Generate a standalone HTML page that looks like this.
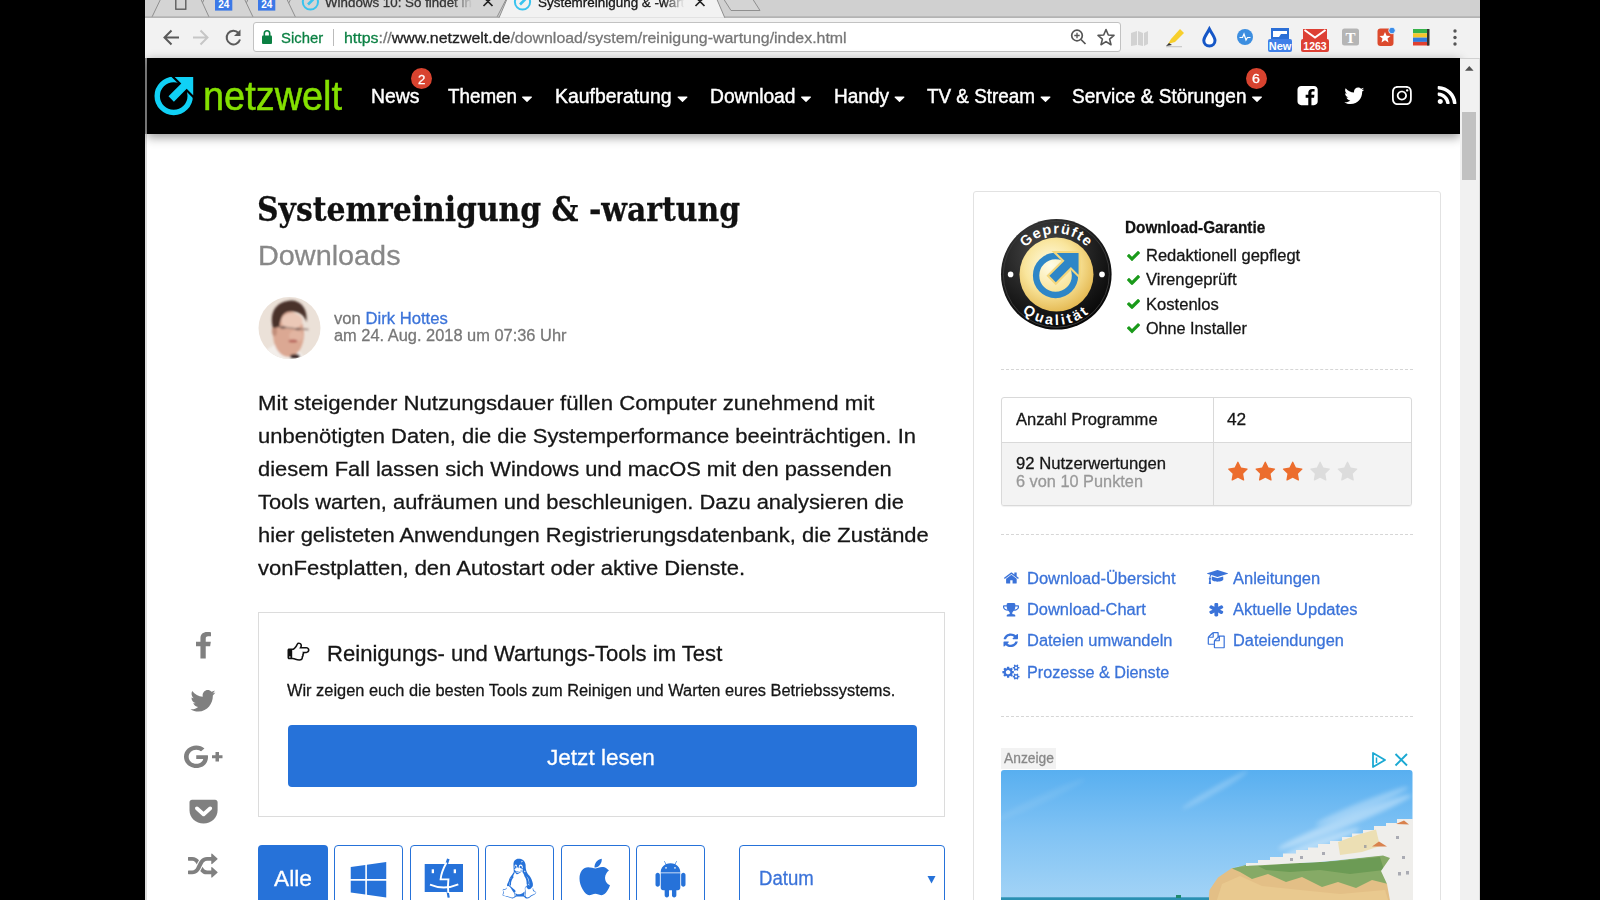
<!DOCTYPE html>
<html lang="de"><head><meta charset="utf-8"><title>Systemreinigung &amp; -wartung - Downloads - netzwelt</title>
<style>
html,body{margin:0;padding:0}
body{width:1600px;height:900px;background:#000;overflow:hidden;position:relative;font-family:"Liberation Sans",sans-serif}
.a{position:absolute;box-sizing:border-box}
.t{position:absolute;white-space:nowrap;line-height:1;margin:0;-webkit-text-stroke:.28px currentColor}
svg{position:absolute;left:0;top:0;overflow:visible}
</style></head><body>
<!-- browser window background -->
<div class="a" style="left:145px;top:0;width:1335px;height:900px;background:#fff"></div>
<div class="a" style="left:145px;top:58px;width:2px;height:76px;background:#8e8e8e"></div><div class="a" style="left:145px;top:134px;width:2px;height:766px;background:#dedede"></div>
<!-- tab strip -->
<div class="a" style="left:145px;top:0;width:1335px;height:17px;background:#d0d0d0"></div>
<!-- toolbar -->
<div class="a" style="left:145px;top:17px;width:1335px;height:41px;background:#f2f2f2"></div>
<div class="a" style="left:253px;top:22px;width:868px;height:30px;background:#fff;border:1px solid #c2c2c2;border-radius:3px"></div>
<div class="a" style="left:333px;top:29px;width:1px;height:17px;background:#bbb"></div>
<!-- page nav -->
<div class="a" style="left:147px;top:58px;width:1313px;height:76.3px;background:#000;box-shadow:0 3px 10px rgba(0,0,0,.42)"></div>
<!-- scrollbar -->
<div class="a" style="left:1460px;top:58px;width:20px;height:842px;background:#f1f1f1;border-right:1px solid #dcdcdc;border-top:1px solid #d0d0d0"></div>
<div class="a" style="left:1462px;top:112px;width:14px;height:68px;background:#c1c1c1"></div>
<!-- nav badges -->
<div class="a" style="left:411px;top:68px;width:21px;height:21px;border-radius:50%;background:#d8432f"></div>
<div class="a" style="left:1246px;top:68px;width:21px;height:21px;border-radius:50%;background:#d8432f"></div>
<!-- main box -->
<div class="a" style="left:258px;top:612px;width:687px;height:205px;border:1px solid #dcdcdc;background:#fff"></div>
<div class="a" style="left:288px;top:724.5px;width:628.5px;height:62.5px;border-radius:4px;background:#2672d9"></div>
<!-- filter buttons -->
<div class="a" style="left:258px;top:845px;width:69.5px;height:70px;border-radius:4px;background:#2672d9"></div>
<div class="a" style="left:334px;top:845px;width:69px;height:70px;border-radius:4px;border:1px solid #2672d9;background:#fff"></div>
<div class="a" style="left:409.5px;top:845px;width:69px;height:70px;border-radius:4px;border:1px solid #2672d9;background:#fff"></div>
<div class="a" style="left:485px;top:845px;width:69px;height:70px;border-radius:4px;border:1px solid #2672d9;background:#fff"></div>
<div class="a" style="left:560.5px;top:845px;width:69px;height:70px;border-radius:4px;border:1px solid #2672d9;background:#fff"></div>
<div class="a" style="left:636px;top:845px;width:69px;height:70px;border-radius:4px;border:1px solid #2672d9;background:#fff"></div>
<div class="a" style="left:739px;top:845px;width:206px;height:70px;border-radius:4px;border:1px solid #2672d9;background:#fff"></div>
<!-- sidebar -->
<div class="a" style="left:973px;top:191px;width:468px;height:730px;border:1px solid #e2e2e2;border-radius:3px;background:#fff"></div>
<div class="a" style="left:1001px;top:369px;width:412px;height:0;border-top:1px dashed #d6d6d6"></div>
<div class="a" style="left:1001px;top:534px;width:412px;height:0;border-top:1px dashed #d6d6d6"></div>
<div class="a" style="left:1001px;top:716px;width:412px;height:0;border-top:1px dashed #d6d6d6"></div>
<div class="a" style="left:1001px;top:397px;width:411px;height:109px;border:1px solid #d9d9d9;border-radius:3px;background:#fff;box-shadow:0 1px 1px rgba(0,0,0,.06);overflow:hidden">
  <div class="a" style="left:0;top:44px;width:411px;height:65px;background:#f3f3f3;border-top:1px solid #d9d9d9"></div>
  <div class="a" style="left:211px;top:0;width:1px;height:109px;background:#d9d9d9"></div>
</div>
<div class="a" style="left:1001px;top:748px;width:55px;height:21px;background:#f2f2f2"></div>
<svg width="1600" height="900" viewBox="0 0 1600 900"><defs>
<radialGradient id="gold" cx="0.42" cy="0.38" r="0.7"><stop offset="0" stop-color="#fffce8"/><stop offset="0.500" stop-color="#f9e59c"/><stop offset="1" stop-color="#e0b043"/></radialGradient>
<radialGradient id="blk" cx="0.4" cy="0.3" r="0.8"><stop offset="0" stop-color="#4a4a4a"/><stop offset="0.6" stop-color="#1c1c1c"/><stop offset="1" stop-color="#000"/></radialGradient>
<linearGradient id="sky" x1="0" y1="0" x2="0" y2="1"><stop offset="0" stop-color="#58aff0"/><stop offset="0.450" stop-color="#7fc2f4"/><stop offset="1" stop-color="#a6d5f6"/></linearGradient>
<clipPath id="adclip"><rect x="1001" y="770" width="411.5" height="140" rx="3"/></clipPath>
<clipPath id="avclip"><circle cx="289.5" cy="328" r="31"/></clipPath>
<filter id="bl2"><feGaussianBlur stdDeviation="2"/></filter>
<filter id="bl05"><feGaussianBlur stdDeviation="0.600"/></filter>
<filter id="bl1"><feGaussianBlur stdDeviation="1"/></filter>
<path id="arcTop" d="M1015.5,274.5 A41,41 0 0 1 1097.5,274.5"/>
<path id="arcBot" d="M1006,274.5 A50.5,50.5 0 0 0 1107,274.5"/>
</defs>
<!-- tabs -->
<g stroke="#8f8f8f" stroke-width="1" fill="#d4d4d4">
<path d="M282,17 L290.500,-0.500 L506,-0.500 L497,17"/>
<path d="M239.500,17 L248,-0.500 L287,-0.500 L295.400,17"/>
<path d="M196,17 L204,-0.500 L244.700,-0.500 L253,17"/>
<path d="M152,17 L160.400,-0.500 L201,-0.500 L209,17"/>
<path d="M724,-0.500 L753,-0.500 L760,10.500 L731,10.500 Z"/>
</g>
<rect x="145" y="16.500" width="1335" height="1.300" fill="#a3a3a3"/>
<path d="M499,17.800 L506.800,-0.500 L717,-0.500 L724.800,17.800" fill="#f2f2f2" stroke="#8f8f8f"/>

<rect x="175.800" y="-3" width="10" height="12.200" fill="none" stroke="#555" stroke-width="1.3"/>
<rect x="215" y="-4" width="17.300" height="14.600" fill="#3b78e7"/><rect x="258" y="-4" width="17.300" height="14.600" fill="#3b78e7"/>
<circle cx="310.400" cy="2" r="7.600" fill="none" stroke="#39c3ee" stroke-width="2"/>
<circle cx="522.500" cy="2" r="7.600" fill="none" stroke="#39c3ee" stroke-width="2"/>
<path d="M308,4.500 L315,-2.500 M520,4.500 L527,-2.500" stroke="#39c3ee" stroke-width="2.600"/>
<path d="M483.500,-3 L492.500,6 M492.500,-3 L483.500,6 M695.500,-3 L704.500,6 M704.500,-3 L695.500,6" stroke="#222" stroke-width="1.700" fill="none"/>
<!-- toolbar icons -->
<g fill="none" stroke="#5a5a5a" stroke-width="2">
<path d="M179,37.5 H165 M171.5,30.5 L164.5,37.5 L171.5,44.5"/>
<path d="M193,37.5 H207 M200.5,30.5 L207.5,37.5 L200.5,44.5" stroke="#c6c6c6"/>
<path d="M238.5,33 A6.8,6.8 0 1 0 240,39.5"/>
<path d="M240.5,29.5 V36 H234 Z" fill="#5a5a5a" stroke="none"/>
</g>
<rect x="262" y="35.5" width="10" height="8.5" rx="1" fill="#0b8043"/>
<path d="M264.3,36 V33.5 A2.7,2.7 0 0 1 269.7,33.5 V36" fill="none" stroke="#0b8043" stroke-width="1.6"/>
<g fill="none" stroke="#555" stroke-width="1.7">
<circle cx="1077" cy="35.5" r="5.3"/><path d="M1081,39.5 L1085.5,44"/><path d="M1074.3,35.5 H1079.7 M1077,32.8 V38.2" stroke-width="1.3"/>
<path d="M1106,29.5 L1108.3,35 L1114,35.4 L1109.6,39.1 L1111,44.7 L1106,41.6 L1101,44.7 L1102.4,39.1 L1098,35.4 L1103.7,35 Z" stroke-linejoin="round" stroke-width="1.6"/>
</g>
<!-- extension icons -->
<g>
<path d="M1131,33 L1137,31 V45 L1131,46 Z M1138,31 L1143,33 V46 L1138,45 Z M1144,33 L1148,31 V44 L1144,46Z" fill="#d2d2d2"/>
<path d="M1168,44 L1171,39 L1180,29 L1184,33 L1175,42 Z" fill="#f7cf2d"/><path d="M1166,46 L1169,43 L1172,45 Z" fill="#333"/><rect x="1166" y="46" width="16" height="1.3" fill="#ccc"/>
<path d="M1209.4,29 C1212,34 1215,37 1215,40.5 A5.6,5.6 0 0 1 1203.8,40.500 C1203.800,37 1207,34 1209.400,29 Z" fill="#fff" stroke="#1657c7" stroke-width="3"/>
<circle cx="1245" cy="37" r="8" fill="#3c8ee0"/><path d="M1239.500,37.500 H1242.500 L1244,34 L1246,40 L1247.500,37.500 H1250.500" fill="none" stroke="#fff" stroke-width="1.200"/>
<rect x="1271" y="28" width="18" height="12" fill="#2b6fd6"/><path d="M1273,31 H1287 V34 L1281,34 L1279,37 H1273Z" fill="#fff"/>
<rect x="1268" y="39" width="24" height="13" rx="2" fill="#3f7fe8"/>
<path d="M1303,29 H1327 V41 H1303 Z" fill="#dd4034"/><path d="M1304.500,30 L1315,37.500 L1325.500,30" fill="none" stroke="#fff" stroke-width="2"/>
<rect x="1301" y="39" width="28" height="13" rx="2" fill="#dd4034"/>
<rect x="1342" y="28.500" width="17" height="17" rx="2.500" fill="#b5b5b5"/>
<rect x="1377.500" y="28.500" width="16" height="17.500" rx="3" fill="#dc4a2d"/><path d="M1385,32 L1386.600,35.800 L1390.500,36 L1387.500,38.600 L1388.500,42.500 L1385,40.300 L1381.500,42.500 L1382.500,38.600 L1379.500,36 L1383.400,35.800 Z" fill="#fff"/><circle cx="1392" cy="30.500" r="3.300" fill="#3b8de8" stroke="#fff" stroke-width=".8"/>
<rect x="1413" y="29" width="16" height="4.300" fill="#37b34a"/><rect x="1413" y="33.300" width="16" height="4.300" fill="#f6c62b"/><rect x="1413" y="37.600" width="16" height="4.300" fill="#2f7de0"/><rect x="1413" y="41.900" width="16" height="3.600" fill="#e0402f"/><rect x="1427" y="29" width="2.500" height="16.500" fill="#333"/>
<circle cx="1455" cy="31" r="1.700" fill="#555"/><circle cx="1455" cy="37.500" r="1.700" fill="#555"/><circle cx="1455" cy="44" r="1.700" fill="#555"/>
</g>
<!-- scrollbar arrow -->
<path d="M1465,70.800 L1469.300,66 L1473.600,70.800 Z" fill="#505050"/>
<!-- netzwelt logo -->
<g id="nwlogo">
<circle cx="173.700" cy="96" r="16.500" fill="none" stroke="#10d1f6" stroke-width="5.400"/>
<path d="M174.700,77 L193.200,77 L193.200,95.300 L186.700,88.800 L173.900,101.800 L168.500,96.300 L181.300,83.400 Z" fill="#10d1f6" stroke="#000" stroke-width="4.400" paint-order="stroke fill" stroke-linejoin="miter"/>
</g>
<!-- avatar -->
<g clip-path="url(#avclip)">
<rect x="256" y="295" width="68" height="68" fill="#ebe1d8"/>
<g filter="url(#bl1)">
<path d="M262,364 L266,350 L276,344 L300,352 L310,364 Z" fill="#f3eeea"/>
<ellipse cx="288.500" cy="334" rx="15.500" ry="23" fill="#dba893"/>
<ellipse cx="292" cy="321" rx="10.500" ry="8" fill="#ebc8b7"/>
<ellipse cx="296" cy="336" rx="7" ry="6" fill="#e2b5a1"/><ellipse cx="283" cy="327.500" rx="3" ry="1.200" fill="#6b4f48"/><ellipse cx="298" cy="329" rx="3" ry="1.200" fill="#6b4f48"/>
<ellipse cx="274.500" cy="331" rx="2.500" ry="5" fill="#c18d79"/>
<path d="M273,328 C269,312 276,302 290,300.500 C300,300 308,308 306.500,322 C304,315 299,311.500 292,311.500 C284,311 280.500,316 279.500,327 Z" fill="#49302a"/>
<path d="M279,326.500 L294,328.500 L308.500,329.500" stroke="#8d766d" stroke-width="1.300" fill="none" opacity=".85"/>
<ellipse cx="293" cy="341" rx="4.500" ry="1.600" fill="#b7655c"/>
<ellipse cx="295" cy="356.500" rx="5" ry="2.500" fill="#3f2c2c"/>
</g>
</g>
<!-- seal -->
<circle cx="1056.300" cy="274.300" r="55.300" fill="url(#blk)"/>
<circle cx="1056.300" cy="274.300" r="53" fill="none" stroke="#3a3a3a" stroke-width="1"/>
<circle cx="1056.500" cy="274.500" r="37" fill="url(#gold)"/>
<circle cx="1010.600" cy="274.400" r="2.800" fill="#fff"/><circle cx="1102" cy="274.400" r="2.800" fill="#fff"/>
<g transform="translate(1056.500,275.500) scale(1.180) translate(-174.500,-96)">
<circle cx="173.700" cy="96" r="16.500" fill="none" stroke="#2e86c7" stroke-width="5.400"/>
<path d="M174.700,77 L193.200,77 L193.200,95.300 L186.700,88.800 L173.900,101.800 L168.500,96.300 L181.300,83.400 Z" fill="#2e86c7" stroke="#f4d77d" stroke-width="3.600" paint-order="stroke fill"/>
</g>
<text font-family="'Liberation Sans',sans-serif" font-weight="700" font-size="14.500" fill="#fff" letter-spacing="1.300"><textPath href="#arcTop" startOffset="50%" text-anchor="middle">Geprüfte</textPath></text>
<text font-family="'Liberation Sans',sans-serif" font-weight="700" font-size="14.500" fill="#fff" letter-spacing="2.600"><textPath href="#arcBot" startOffset="50%" text-anchor="middle">Qualität</textPath></text>
<!-- ext labels text -->
<text x="1280" y="49.500" text-anchor="middle" font-family="'Liberation Sans',sans-serif" font-weight="700" font-size="11" fill="#fff">New</text>
<text x="1315" y="49.500" text-anchor="middle" font-family="'Liberation Sans',sans-serif" font-weight="700" font-size="10.500" fill="#fff">1263</text>
<text x="1350.500" y="42.500" text-anchor="middle" font-family="'Liberation Serif',serif" font-weight="700" font-size="15" fill="#fff">T</text>
<text x="223.700" y="8" text-anchor="middle" font-family="'Liberation Sans',sans-serif" font-weight="700" font-size="10" fill="#fff">24</text>
<text x="266.700" y="8" text-anchor="middle" font-family="'Liberation Sans',sans-serif" font-weight="700" font-size="10" fill="#fff">24</text>
<!-- finder icon -->
<rect x="424.700" y="864" width="38.300" height="28" fill="#2672d9"/>
<path d="M446,866 L448.300,858.800" stroke="#2672d9" stroke-width="2.600" fill="none"/>
<path d="M447.300,890 L448.700,897.600" stroke="#2672d9" stroke-width="2.200" fill="none"/>
<path d="M446.500,862.500 C443.500,868 441,874 440.600,879.400 H448.400 C447.800,884 447.800,888 448.300,893" stroke="#fff" stroke-width="1.900" fill="none"/>
<rect x="431.700" y="869.300" width="2.300" height="3.900" fill="#fff"/><rect x="453.700" y="869.300" width="2.300" height="3.900" fill="#fff"/>
<path d="M430,884.600 Q444,890.500 458.300,884.300" stroke="#fff" stroke-width="1.800" fill="none"/>
<!-- select arrow -->
<path d="M927.500,876 H935.500 L931.500,883.500 Z" fill="#2672d9"/>
<!-- ad choice icons -->
<path d="M1373,753 L1385,760 L1373,767 Z" fill="none" stroke="#1ba9d3" stroke-width="1.800" stroke-linejoin="round"/><path d="M1376.500,757.500 V763" stroke="#1ba9d3" stroke-width="1.500"/>
<path d="M1395.500,754 L1407,765.500 M1407,754 L1395.500,765.500" stroke="#1ba9d3" stroke-width="1.900"/>
<!-- ad image -->
<g clip-path="url(#adclip)">
<rect x="1001" y="770" width="412" height="135" fill="url(#sky)"/>
<g filter="url(#bl2)" fill="#fff">
<ellipse cx="1345" cy="822" rx="72" ry="5" transform="rotate(-22 1345 822)" opacity=".38"/>
<ellipse cx="1362" cy="806" rx="50" ry="4" transform="rotate(-22 1362 806)" opacity=".3"/>
<ellipse cx="1322" cy="842" rx="40" ry="4" transform="rotate(-20 1322 842)" opacity=".4"/>
<ellipse cx="1215" cy="790" rx="38" ry="3" transform="rotate(-30 1215 790)" opacity=".22"/>
<ellipse cx="1040" cy="800" rx="50" ry="4" transform="rotate(-25 1040 800)" opacity=".08"/>
</g>
<g filter="url(#bl05)">
<path d="M1208,906 L1209.500,890 L1218,877.500 L1232,868 L1300,866 L1392,858 L1396,906 Z" fill="#e3bf86"/>
<path d="M1215,906 L1222,884 L1240,876 L1262,886 L1300,890 L1340,894 L1385,890 L1390,906 Z" fill="#e9c98f"/>
<path d="M1232,868.500 L1246,865 L1266,863.500 L1320,862.500 L1383,855 L1392,853 L1394,868 L1388,884 L1372,880 L1356,888 L1338,882 L1322,887 L1302,877 L1286,882 L1268,874 L1252,879 L1240,872 Z" fill="#86aa66"/>
<path d="M1258,866 L1300,863 L1340,861 L1380,857 L1384,870 L1350,874 L1320,870 L1290,872 L1266,870 Z" fill="#6c9b54"/>
<path d="M1233,866.500 L1246,866 V863 H1258 V860 H1270 V857 H1283 V853.500 H1296 V850 H1308 V847.500 H1318 V844 H1330 V841 H1342 V837 H1352 V833.500 H1363 V830 H1374 V826 H1386 V823 H1397 V819 H1413 L1413,906 L1391,906 L1387,884 L1381,871 L1390,858 L1383,855.500 L1340,860 L1320,862 L1290,863.500 L1265,865 Z" fill="#efeeeb"/>
<path d="M1338,842 L1357,835 L1376,829.500 L1380,846 L1362,852 L1340,855 Z" fill="#ecdfb4"/>
<path d="M1372,846.500 L1379,841.500 L1387,846.500 Z M1396,824 L1404,820.500 L1409,824.500Z" fill="#d9824e"/>
<path d="M1290,858 h3 v3 h-3z M1300,856 h3 v3 h-3z M1322,852 h3 v3 h-3z M1364,845 h2.500 v3 h-2.500z M1396,836 h3 v3 h-3z M1402,856 h3 v3 h-3z M1398,872 h3 v3.500 h-3z M1406,871 h3 v3.500 h-3z" fill="#8d8f9b" opacity=".7"/>
</g>
<rect x="1001" y="897.300" width="208" height="8" fill="#2a90b2"/>
<rect x="1176" y="895" width="5" height="3" fill="#1f8a6e"/>
</g>
<path transform="translate(1297.50,103.60) scale(0.01315,-0.01250)" fill="#fff" d="M1248 1408H288C129 1408 0 1279 0 1120V160C0 1 129 -128 288 -128H820V467H620V699H820V870C820 1068 942 1176 1119 1176C1203 1176 1276 1170 1297 1167V960L1175 959C1078 959 1060 914 1060 847V699H1289L1259 467H1060V-128H1248C1407 -128 1536 1 1536 160V1120C1536 1279 1407 1408 1248 1408Z"/>
<path transform="translate(1343.74,104.00) scale(0.01263,-0.01289)" fill="#fff" d="M1620 1128C1562 1103 1499 1085 1434 1078C1501 1118 1552 1181 1576 1256C1514 1219 1444 1192 1371 1178C1312 1241 1228 1280 1135 1280C956 1280 812 1135 812 957C812 932 815 907 820 883C552 897 313 1025 154 1221C126 1173 110 1118 110 1058C110 946 167 847 254 789C201 791 151 806 108 830C108 829 108 827 108 826C108 669 219 539 367 509C340 502 311 498 282 498C261 498 241 500 221 503C262 375 381 282 523 279C412 192 273 141 122 141C95 141 70 142 44 145C187 53 357 0 540 0C1134 0 1459 492 1459 919C1459 933 1459 947 1458 961C1521 1007 1576 1064 1620 1128Z"/>
<path transform="translate(1392.00,103.42) scale(0.01289,-0.01237)" fill="#fff" d="M1024 640C1024 499 909 384 768 384C627 384 512 499 512 640C512 781 627 896 768 896C909 896 1024 781 1024 640ZM1162 640C1162 858 986 1034 768 1034C550 1034 374 858 374 640C374 422 550 246 768 246C986 246 1162 422 1162 640ZM1270 1050C1270 1101 1229 1142 1178 1142C1127 1142 1086 1101 1086 1050C1086 999 1127 958 1178 958C1229 958 1270 999 1270 1050ZM768 1270C880 1270 1120 1279 1221 1239C1256 1225 1282 1208 1309 1181C1336 1154 1353 1128 1367 1093C1407 992 1398 752 1398 640C1398 528 1407 288 1367 187C1353 152 1336 126 1309 99C1282 72 1256 55 1221 41C1120 1 880 10 768 10C656 10 416 1 315 41C280 55 254 72 227 99C200 126 183 152 169 187C129 288 138 528 138 640C138 752 129 992 169 1093C183 1128 200 1154 227 1181C254 1208 280 1225 315 1239C416 1279 656 1270 768 1270ZM1536 640C1536 746 1537 851 1531 957C1525 1080 1497 1189 1407 1279C1317 1369 1208 1397 1085 1403C979 1409 874 1408 768 1408C662 1408 557 1409 451 1403C328 1397 219 1369 129 1279C39 1189 11 1080 5 957C-1 851 0 746 0 640C0 534 -1 429 5 323C11 200 39 91 129 1C219 -89 328 -117 451 -123C557 -129 662 -128 768 -128C874 -128 979 -129 1085 -123C1208 -117 1317 -89 1407 1C1497 91 1525 200 1531 323C1537 429 1536 534 1536 640Z"/>
<path transform="translate(1437.70,104.00) scale(0.01335,-0.01278)" fill="#fff" d="M384 192C384 298 298 384 192 384C86 384 0 298 0 192C0 86 86 0 192 0C298 0 384 86 384 192ZM896 69C879 282 786 483 634 634C483 786 282 879 69 896C67 896 66 896 64 896C48 896 32 890 21 879C7 867 0 850 0 832V697C0 664 25 637 58 634C363 605 605 363 634 58C637 25 664 0 697 0H832C850 0 867 7 879 21C891 34 897 51 896 69ZM1408 67C1390 417 1243 746 994 994C746 1243 417 1390 67 1408C66 1408 65 1408 64 1408C48 1408 32 1402 20 1390C7 1378 0 1362 0 1344V1201C0 1168 26 1140 60 1138C641 1104 1104 641 1137 60C1139 26 1167 0 1201 0H1344C1362 0 1378 7 1390 20C1403 33 1409 50 1408 67Z"/>
<path transform="translate(194.35,656.37) scale(0.01736,-0.01587)" fill="#808080" d="M959 1524C932 1528 839 1536 731 1536C505 1536 350 1398 350 1145V927H95V631H350V-128H656V631H910L949 927H656V1116C656 1201 679 1260 802 1260H959Z"/>
<path transform="translate(189.80,711.60) scale(0.01580,-0.01688)" fill="#808080" d="M1620 1128C1562 1103 1499 1085 1434 1078C1501 1118 1552 1181 1576 1256C1514 1219 1444 1192 1371 1178C1312 1241 1228 1280 1135 1280C956 1280 812 1135 812 957C812 932 815 907 820 883C552 897 313 1025 154 1221C126 1173 110 1118 110 1058C110 946 167 847 254 789C201 791 151 806 108 830C108 829 108 827 108 826C108 669 219 539 367 509C340 502 311 498 282 498C261 498 241 500 221 503C262 375 381 282 523 279C412 192 273 141 122 141C95 141 70 142 44 145C187 53 357 0 540 0C1134 0 1459 492 1459 919C1459 933 1459 947 1458 961C1521 1007 1576 1064 1620 1128Z"/>
<path transform="translate(184.00,766.57) scale(0.01671,-0.01535)" fill="#808080" d="M1437 623C1437 671 1432 708 1425 745H733V493H1149C1132 386 1023 177 733 177C483 177 279 384 279 640C279 896 483 1103 733 1103C876 1103 971 1042 1025 990L1224 1181C1096 1301 931 1373 733 1373C328 1373 0 1045 0 640C0 235 328 -93 733 -93C1156 -93 1437 204 1437 623ZM2304 745H2095V954H1885V745H1676V535H1885V326H2095V535H2304Z"/>
<path transform="translate(189.50,821.52) scale(0.01634,-0.01549)" fill="#808080" d="M1565 1408H156C71 1408 0 1337 0 1252V733C0 254 383 -128 861 -128C1337 -128 1720 254 1720 733V1252C1720 1338 1652 1408 1565 1408ZM861 344C831 344 801 356 780 377L375 765C352 787 339 818 339 850C339 915 392 968 457 968C487 968 516 956 538 935L861 625L1184 935C1206 956 1235 968 1266 968C1331 968 1384 915 1384 850C1384 818 1370 787 1347 765L943 377C921 356 891 344 861 344Z"/>
<path transform="translate(188.00,876.25) scale(0.01652,-0.01513)" fill="#808080" d="M666 1055C565 1197 434 1280 256 1280H32C14 1280 0 1266 0 1248V1056C0 1038 14 1024 32 1024H256C407 1024 471 903 529 782C569 876 610 969 666 1055ZM1792 256C1792 264 1789 273 1783 279L1464 598C1457 604 1449 608 1440 608C1422 608 1408 594 1408 576V384H1152C1001 384 937 505 879 626C839 532 798 439 743 353C928 93 1111 128 1408 128V-64C1408 -81 1423 -96 1440 -96C1448 -96 1457 -93 1463 -87L1783 233C1789 239 1792 248 1792 256ZM1792 1152C1792 1160 1789 1169 1783 1175L1464 1494C1457 1500 1449 1504 1440 1504C1422 1504 1408 1490 1408 1472V1280H1152C827 1280 697 1012 586 754C562 697 537 639 508 583C452 475 389 384 256 384H32C14 384 0 370 0 352V160C0 142 14 128 32 128H256C581 128 711 396 822 654C846 711 871 769 900 825C956 933 1019 1024 1152 1024H1408V832C1408 814 1423 800 1440 800C1448 800 1457 803 1463 809L1783 1129C1789 1135 1792 1144 1792 1152Z"/>
<path transform="translate(287.50,659.23) scale(0.01228,-0.01188)" fill="#111" d="M256 192C256 157 227 128 192 128C157 128 128 157 128 192C128 227 157 256 192 256C227 256 256 227 256 192ZM1664 768C1664 699 1605 640 1536 640H1205C1226 616 1240 569 1240 537C1240 490 1221 450 1187 418C1199 397 1205 373 1205 349C1205 303 1182 246 1140 223C1143 205 1145 186 1145 167C1145 47 1068 0 956 0C762 0 591 128 416 128H384V768H416C522 768 593 858 657 931C698 977 736 1023 769 1076C782 1097 794 1119 806 1141C817 1164 868 1280 896 1280C981 1280 1056 1248 1056 1152C1056 1024 960 959 960 896H1536C1603 896 1664 836 1664 768ZM1792 769C1792 907 1674 1024 1536 1024H1162C1177 1065 1184 1108 1184 1152C1184 1321 1055 1408 896 1408C762 1408 719 1237 661 1144C631 1097 597 1056 561 1015C532 982 464 896 416 896H128C57 896 0 839 0 768V128C0 57 57 0 128 0H416C479 0 578 -37 639 -59C743 -97 849 -128 961 -128C1146 -128 1275 -17 1273 172C1312 222 1333 286 1333 350C1333 364 1332 379 1330 393C1351 430 1364 470 1367 512H1536C1676 512 1792 629 1792 769Z"/>
<path transform="translate(350.75,892.04) scale(0.02133,-0.02133)" fill="#2672d9" d="M682 530H0V-27L682 -121ZM682 1273 0 1179V614H682ZM1664 530H757V-131L1664 -256ZM1664 1408 757 1283V614H1664Z"/>
<path transform="translate(502.36,892.82) scale(0.02216,-0.02218)" fill="#2672d9" d="M663 1125C631 1127 629 1104 639 1105C650 1105 643 1123 663 1125ZM750 1111C760 1115 750 1135 721 1122C739 1127 740 1108 750 1111ZM399 684C407 681 402 672 397 655C391 641 377 629 372 630C358 632 376 642 383 655C392 669 390 687 399 684ZM1254 325C1213 358 1090 364 1087 284C1065 284 1049 282 1036 266C986 207 1032 89 1027 25C1023 -31 1007 -86 999 -142C969 -141 972 -120 981 -89C990 -62 1003 -29 1004 3C1005 33 1002 51 994 55C987 60 976 51 960 25C926 -30 852 -54 783 -62C715 -71 651 -64 617 -26C606 -13 586 -30 584 -33C581 -38 595 -47 606 -67C622 -95 637 -139 599 -159C600 -58 568 -52 535 10C599 17 608 85 577 114C553 139 415 241 380 281C363 299 340 308 331 329C309 377 294 446 321 495C326 504 330 500 326 482C304 377 372 291 387 335C398 365 388 419 394 463C404 539 473 686 504 694C457 782 559 850 558 927C557 977 602 866 647 842C697 816 752 892 830 930C852 941 880 953 878 963C869 1008 776 907 692 904C654 903 640 912 625 926C581 969 630 933 696 945C725 950 735 955 766 968C798 980 833 999 868 1009C893 1015 891 1034 881 1039C876 1042 868 1042 861 1031C846 1005 775 990 753 983C724 974 693 966 651 968C587 970 602 1000 556 1026C543 1033 547 1053 564 1071C574 1080 599 1086 612 1107C614 1110 630 1127 643 1136C647 1139 647 1217 608 1218C574 1219 564 1193 565 1167C567 1141 581 1119 590 1119C608 1120 591 1100 581 1097C566 1092 546 1155 549 1185C551 1217 567 1273 607 1272C643 1271 669 1226 668 1148C668 1135 726 1154 746 1133C760 1119 698 1271 836 1282C872 1275 907 1263 921 1179C916 1171 930 1113 908 1106C881 1097 864 1107 880 1133C890 1159 880 1225 825 1221C769 1218 777 1119 792 1117C807 1115 845 1088 872 1083C959 1066 895 1016 906 955C919 887 964 905 1005 723C1013 712 1047 702 1080 562C1109 437 1068 345 1138 353C1154 354 1178 359 1188 395C1214 487 1174 598 1134 673C1111 717 1089 746 1077 756C1123 729 1182 642 1196 578C1214 493 1226 457 1199 367C1215 360 1254 343 1254 325ZM626 1152C626 1149 624 1149 623 1149C614 1149 613 1157 615 1169C617 1178 612 1184 608 1184C602 1182 600 1200 612 1197C618 1195 630 1177 626 1152ZM1045 955C1048 941 1039 925 1027 927C1007 931 960 979 981 1002C988 1009 992 989 1011 977C1027 967 1041 974 1045 955ZM867 1168C867 1165 857 1161 857 1163C855 1178 847 1192 839 1194C833 1196 829 1202 842 1203C847 1204 868 1192 867 1168ZM921 1401C916 1390 893 1393 888 1391C869 1384 863 1366 854 1373C844 1381 859 1390 863 1401C866 1411 856 1432 876 1434C884 1434 892 1427 900 1419C909 1412 922 1406 921 1401ZM1486 60C1458 78 1390 97 1384 227C1358 204 1361 83 1433 59C1513 32 1563 -13 1414 -64C1316 -98 1299 -108 1221 -173C1142 -239 1024 -213 1045 -75C1056 -2 1062 57 1044 120C1035 150 1031 190 1037 217C1048 271 1077 287 1106 236C1124 203 1130 165 1194 162C1294 158 1314 259 1346 264C1367 267 1389 328 1373 426C1355 531 1293 696 1214 780C1148 850 1107 911 1081 998C1059 1072 1047 1143 1051 1212C1057 1300 1008 1423 930 1481C881 1517 804 1537 735 1536C696 1536 659 1530 631 1515C515 1452 499 1362 501 1259C503 1163 506 1053 517 949C504 901 436 810 393 754C335 697 306 586 268 489C248 438 215 414 212 348C211 329 212 281 229 295C297 347 382 215 511 13C535 -26 622 -189 470 -210C419 -217 337 -181 258 -161C187 -144 114 -133 74 -122C49 -115 39 -106 37 -96C31 -69 67 -31 68 1C70 33 57 50 46 76C35 102 32 122 41 133C47 142 61 145 84 143C113 140 148 146 167 158C198 177 213 216 199 264C199 217 183 200 145 178C109 158 54 175 28 152C-2 126 39 57 36 6C33 -32 -7 -76 11 -115C29 -154 114 -159 202 -177C328 -203 401 -249 459 -251C544 -254 557 -169 689 -166C728 -165 766 -163 804 -162C847 -162 890 -162 934 -163C1022 -166 992 -212 1049 -241C1098 -266 1185 -256 1206 -236C1234 -209 1310 -145 1367 -116C1440 -79 1609 -16 1486 60Z"/>
<path transform="translate(579.50,892.40) scale(0.02190,-0.02191)" fill="#2672d9" d="M1393 321C1334 339 1281 381 1235 447C1189 513 1166 588 1166 670C1166 746 1188 815 1231 877C1255 912 1293 951 1345 995C1311 1037 1276 1071 1241 1095C1179 1138 1108 1160 1028 1160C979 1160 921 1148 855 1126C789 1103 741 1092 712 1092C689 1092 643 1102 574 1122C504 1142 446 1152 397 1152C282 1152 188 1104 113 1008C38 911 0 787 0 634C0 470 50 303 147 131C246 -41 345 -128 448 -128C481 -128 525 -117 580 -94C634 -72 682 -61 722 -61C763 -61 814 -71 873 -93C933 -114 979 -125 1013 -125C1098 -125 1184 -60 1270 71C1328 158 1368 242 1393 321ZM1017 1494C1017 1501 1016 1507 1016 1514C1015 1520 1013 1527 1011 1536C895 1509 811 1460 761 1388C711 1316 685 1230 683 1131C730 1135 764 1141 787 1148C823 1160 859 1184 895 1220C937 1262 968 1308 988 1358C1007 1407 1017 1453 1017 1494Z"/>
<path transform="translate(655.50,891.88) scale(0.02131,-0.02194)" fill="#2672d9" d="M493 1053C472 1053 455 1071 455 1092C455 1113 472 1131 493 1131C515 1131 532 1113 532 1092C532 1071 515 1053 493 1053ZM915 1053C893 1053 876 1071 876 1092C876 1113 893 1131 915 1131C936 1131 953 1113 953 1092C953 1071 936 1053 915 1053ZM103 869C46 869 0 823 0 767V337C0 280 46 234 103 234C160 234 205 280 205 337V767C205 823 159 869 103 869ZM1163 850H245V184C245 123 294 74 355 74H429L430 -153C430 -210 476 -256 532 -256C589 -256 635 -210 635 -153V74H773V-153C773 -210 819 -256 876 -256C933 -256 979 -210 979 -153V74H1054C1114 74 1163 123 1163 184ZM931 1255 1002 1386C1006 1393 1004 1402 997 1406C990 1409 981 1407 977 1400L905 1268C844 1295 776 1310 704 1310C632 1310 564 1295 503 1268L431 1400C427 1407 418 1409 411 1406C404 1402 402 1393 406 1386L477 1255C336 1183 241 1045 241 886H1166C1166 1045 1071 1183 931 1255ZM1408 767C1408 824 1362 869 1305 869C1249 869 1203 824 1203 767V337C1203 280 1249 234 1305 234C1362 234 1408 280 1408 337Z"/>
<path transform="translate(1003.76,583.50) scale(0.00918,-0.00865)" fill="#3b73d9" d="M1408 544C1408 546 1408 548 1407 550L832 1024L257 550C257 548 256 546 256 544V64C256 29 285 0 320 0H704V384H960V0H1344C1379 0 1408 29 1408 64ZM1631 613C1642 626 1640 647 1627 658L1408 840V1248C1408 1266 1394 1280 1376 1280H1184C1166 1280 1152 1266 1152 1248V1053L908 1257C866 1292 798 1292 756 1257L37 658C24 647 22 626 33 613L95 539C100 533 108 529 116 528C125 527 133 530 140 535L832 1112L1524 535C1530 530 1537 528 1545 528C1546 528 1547 528 1548 528C1556 529 1564 533 1569 539L1631 613Z"/>
<path transform="translate(1003.00,615.38) scale(0.00962,-0.00879)" fill="#3b73d9" d="M458 653C261 694 128 830 128 928V1024H384C384 867 416 745 458 653ZM1536 928C1536 830 1403 694 1206 653C1248 745 1280 867 1280 1024H1536V928ZM1664 1056C1664 1109 1621 1152 1568 1152H1280V1248C1280 1336 1208 1408 1120 1408H544C456 1408 384 1336 384 1248V1152H96C43 1152 0 1109 0 1056V928C0 738 230 528 542 513C582 462 619 432 637 418C690 370 704 320 704 256C704 192 672 128 576 128C480 128 384 64 384 -32V-96C384 -114 398 -128 416 -128H1248C1266 -128 1280 -114 1280 -96V-32C1280 64 1184 128 1088 128C992 128 960 192 960 256C960 320 974 370 1027 418C1045 432 1082 462 1122 513C1434 528 1664 738 1664 928Z"/>
<path transform="translate(1003.50,645.88) scale(0.00944,-0.00879)" fill="#3b73d9" d="M1511 480C1511 497 1497 512 1479 512H1287C1272 512 1262 503 1257 489C1240 449 1228 411 1204 372C1111 220 946 128 768 128C639 128 514 178 420 266L557 403C569 415 576 431 576 448C576 483 547 512 512 512H64C29 512 0 483 0 448V0C0 -35 29 -64 64 -64C81 -64 97 -57 109 -45L238 84C380 -51 569 -128 764 -128C1133 -128 1425 119 1510 473C1511 475 1511 478 1511 480ZM1536 1280C1536 1315 1507 1344 1472 1344C1455 1344 1439 1337 1427 1325L1297 1196C1155 1330 964 1408 768 1408C399 1408 104 1162 18 807C18 805 18 802 18 800C18 783 32 768 50 768H249C264 768 274 777 279 791C296 831 308 869 332 908C425 1060 590 1152 768 1152C897 1152 1022 1103 1117 1015L979 877C967 865 960 849 960 832C960 797 989 768 1024 768H1472C1507 768 1536 797 1536 832Z"/>
<path transform="translate(1002.40,677.63) scale(0.00891,-0.00857)" fill="#3b73d9" d="M896 640C896 499 781 384 640 384C499 384 384 499 384 640C384 781 499 896 640 896C781 896 896 781 896 640ZM1664 128C1664 58 1607 0 1536 0C1466 0 1408 57 1408 128C1408 198 1466 256 1536 256C1606 256 1664 198 1664 128ZM1664 1152C1664 1082 1607 1024 1536 1024C1466 1024 1408 1081 1408 1152C1408 1222 1466 1280 1536 1280C1606 1280 1664 1222 1664 1152ZM1280 731C1280 745 1270 758 1256 761L1104 784C1095 812 1083 839 1070 866C1098 905 1128 941 1157 980C1161 986 1164 992 1164 999C1164 1027 1046 1135 1020 1159C1014 1164 1007 1167 999 1167C992 1167 985 1165 979 1160L861 1071C837 1083 812 1094 786 1102L763 1255C761 1269 747 1280 733 1280H547C533 1280 521 1270 517 1256C504 1207 499 1152 494 1102C467 1093 442 1083 417 1070L302 1160C296 1164 289 1167 281 1167C252 1167 140 1046 120 1019C115 1013 113 1006 113 999C113 992 116 985 120 979C152 941 182 904 210 864C197 839 186 814 178 788L23 764C10 762 0 747 0 734V549C0 535 10 522 24 520L176 496C185 468 197 441 211 414C182 375 152 338 123 300C119 294 116 288 116 281C116 252 234 145 260 121C266 116 273 113 281 113C288 113 296 115 301 120L419 209C443 197 468 186 494 178L517 25C519 11 533 0 547 0H733C747 0 759 10 763 24C776 73 781 128 786 179C813 187 838 197 863 210L978 120C984 116 991 113 999 113C1028 113 1140 235 1160 262C1165 267 1167 274 1167 281C1167 289 1164 295 1160 301C1128 339 1098 376 1070 416C1083 441 1094 466 1102 492L1257 516C1270 518 1280 533 1280 546ZM1920 198C1920 213 1791 227 1771 229C1763 247 1753 265 1741 281C1750 301 1792 401 1792 419C1792 421 1791 424 1788 426C1776 433 1669 496 1664 496L1658 494C1624 460 1594 421 1566 382C1556 383 1546 384 1536 384C1526 384 1516 383 1506 382C1496 397 1421 496 1408 496C1403 496 1296 432 1284 426C1281 424 1280 421 1280 419C1280 402 1322 301 1331 281C1319 265 1309 247 1301 229C1281 227 1152 213 1152 198V58C1152 43 1281 29 1301 27C1309 8 1319 -9 1331 -25C1322 -45 1280 -146 1280 -163C1280 -165 1281 -168 1284 -170C1296 -177 1403 -241 1408 -241C1421 -241 1496 -141 1506 -126C1516 -127 1526 -128 1536 -128C1546 -128 1556 -127 1566 -126C1576 -141 1651 -241 1664 -241C1669 -241 1776 -177 1788 -170C1791 -168 1792 -166 1792 -163C1792 -145 1750 -45 1741 -25C1753 -9 1763 8 1771 27C1791 29 1920 43 1920 58ZM1920 1222C1920 1237 1791 1251 1771 1253C1763 1271 1753 1289 1741 1305C1750 1325 1792 1425 1792 1443C1792 1445 1791 1448 1788 1450C1776 1457 1669 1520 1664 1520L1658 1518C1624 1484 1594 1445 1566 1406C1556 1407 1546 1408 1536 1408C1526 1408 1516 1407 1506 1406C1496 1421 1421 1520 1408 1520C1403 1520 1296 1456 1284 1450C1281 1448 1280 1445 1280 1443C1280 1426 1322 1325 1331 1305C1319 1289 1309 1271 1301 1253C1281 1251 1152 1237 1152 1222V1082C1152 1067 1281 1053 1301 1051C1309 1032 1319 1015 1331 999C1322 979 1280 878 1280 861C1280 859 1281 856 1284 854C1296 847 1403 783 1408 783C1421 783 1496 883 1506 898C1516 897 1526 896 1536 896C1546 896 1556 897 1566 898C1576 883 1651 783 1664 783C1669 783 1776 847 1788 854C1791 856 1792 858 1792 861C1792 879 1750 979 1741 999C1753 1015 1763 1032 1771 1051C1791 1053 1920 1067 1920 1082Z"/>
<path transform="translate(1207.00,582.83) scale(0.00911,-0.00911)" fill="#3b73d9" d="M1774 700 1200 519C1184 514 1168 512 1152 512C1136 512 1120 514 1104 519L530 700L512 384C504 243 799 128 1152 128C1505 128 1800 243 1792 384ZM2304 1024C2304 1038 2295 1050 2282 1055L1162 1407C1158 1408 1155 1408 1152 1408C1149 1408 1146 1408 1142 1407L22 1055C9 1050 0 1038 0 1024C0 1010 9 998 22 993L355 889C293 802 263 676 257 559C219 537 192 496 192 448C192 403 215 364 250 341L192 -92C191 -101 194 -110 200 -117C206 -124 215 -128 224 -128H416C425 -128 434 -124 440 -117C446 -110 449 -101 448 -92L390 341C425 364 448 403 448 448C448 495 423 535 385 557C393 692 433 802 490 847L1142 641C1146 640 1149 640 1152 640C1155 640 1158 640 1162 641L2282 993C2295 998 2304 1010 2304 1024Z"/>
<path transform="translate(1208.14,615.28) scale(0.00980,-0.00872)" fill="#3b73d9" d="M1482 486 1216 640 1482 794C1543 829 1564 908 1529 969L1465 1079C1430 1140 1351 1161 1290 1126L1024 973V1280C1024 1350 966 1408 896 1408H768C698 1408 640 1350 640 1280V973L374 1126C313 1161 234 1140 199 1079L135 969C100 908 121 829 182 794L448 640L182 486C121 451 100 372 135 311L199 201C234 140 313 119 374 154L640 307V0C640 -70 698 -128 768 -128H896C966 -128 1024 -70 1024 0V307L1290 154C1351 119 1430 140 1465 201L1529 311C1564 372 1543 451 1482 486Z"/>
<path transform="translate(1207.70,645.97) scale(0.00954,-0.00910)" fill="#3b73d9" d="M1696 1152H1280C1241 1152 1191 1135 1152 1112V1440C1152 1493 1109 1536 1056 1536H640C587 1536 513 1505 476 1468L68 1060C31 1023 0 949 0 896V224C0 171 43 128 96 128H640V-160C640 -213 683 -256 736 -256H1696C1749 -256 1792 -213 1792 -160V1056C1792 1109 1749 1152 1696 1152ZM1152 939V640H853ZM512 1323V1024H213ZM708 676C671 639 640 565 640 512V256H128V896H544C597 896 640 939 640 992V1408H1024V992ZM1664 -128H768V512H1184C1237 512 1280 555 1280 608V1024H1664Z"/>
<path transform="translate(1125.99,261.12) scale(0.00839,-0.00842)" fill="#1a9a1a" d="M1671 970C1671 995 1661 1020 1643 1038L1507 1174C1489 1192 1464 1202 1439 1202C1414 1202 1389 1192 1371 1174L715 517L421 812C403 830 378 840 353 840C328 840 303 830 285 812L149 676C131 658 121 633 121 608C121 583 131 558 149 540L511 178L647 42C665 24 690 14 715 14C740 14 765 24 783 42L919 178L1643 902C1661 920 1671 945 1671 970Z"/>
<path transform="translate(1125.99,285.17) scale(0.00839,-0.00842)" fill="#1a9a1a" d="M1671 970C1671 995 1661 1020 1643 1038L1507 1174C1489 1192 1464 1202 1439 1202C1414 1202 1389 1192 1371 1174L715 517L421 812C403 830 378 840 353 840C328 840 303 830 285 812L149 676C131 658 121 633 121 608C121 583 131 558 149 540L511 178L647 42C665 24 690 14 715 14C740 14 765 24 783 42L919 178L1643 902C1661 920 1671 945 1671 970Z"/>
<path transform="translate(1125.99,309.22) scale(0.00839,-0.00842)" fill="#1a9a1a" d="M1671 970C1671 995 1661 1020 1643 1038L1507 1174C1489 1192 1464 1202 1439 1202C1414 1202 1389 1192 1371 1174L715 517L421 812C403 830 378 840 353 840C328 840 303 830 285 812L149 676C131 658 121 633 121 608C121 583 131 558 149 540L511 178L647 42C665 24 690 14 715 14C740 14 765 24 783 42L919 178L1643 902C1661 920 1671 945 1671 970Z"/>
<path transform="translate(1125.99,333.27) scale(0.00839,-0.00842)" fill="#1a9a1a" d="M1671 970C1671 995 1661 1020 1643 1038L1507 1174C1489 1192 1464 1202 1439 1202C1414 1202 1389 1192 1371 1174L715 517L421 812C403 830 378 840 353 840C328 840 303 830 285 812L149 676C131 658 121 633 121 608C121 583 131 558 149 540L511 178L647 42C665 24 690 14 715 14C740 14 765 24 783 42L919 178L1643 902C1661 920 1671 945 1671 970Z"/>
<path transform="translate(1228.00,479.61) scale(0.01190,-0.01197)" fill="#ec6d2d" d="M1664 889C1664 919 1632 931 1608 935L1106 1008L881 1463C872 1482 855 1504 832 1504C809 1504 792 1482 783 1463L558 1008L56 935C31 931 0 919 0 889C0 871 13 854 25 841L389 487L303 -13C302 -20 301 -26 301 -33C301 -59 314 -83 343 -83C357 -83 370 -78 383 -71L832 165L1281 -71C1293 -78 1307 -83 1321 -83C1350 -83 1362 -59 1362 -33C1362 -26 1362 -20 1361 -13L1275 487L1638 841C1651 854 1664 871 1664 889Z"/>
<path transform="translate(1255.40,479.61) scale(0.01190,-0.01197)" fill="#ec6d2d" d="M1664 889C1664 919 1632 931 1608 935L1106 1008L881 1463C872 1482 855 1504 832 1504C809 1504 792 1482 783 1463L558 1008L56 935C31 931 0 919 0 889C0 871 13 854 25 841L389 487L303 -13C302 -20 301 -26 301 -33C301 -59 314 -83 343 -83C357 -83 370 -78 383 -71L832 165L1281 -71C1293 -78 1307 -83 1321 -83C1350 -83 1362 -59 1362 -33C1362 -26 1362 -20 1361 -13L1275 487L1638 841C1651 854 1664 871 1664 889Z"/>
<path transform="translate(1282.80,479.61) scale(0.01190,-0.01197)" fill="#ec6d2d" d="M1664 889C1664 919 1632 931 1608 935L1106 1008L881 1463C872 1482 855 1504 832 1504C809 1504 792 1482 783 1463L558 1008L56 935C31 931 0 919 0 889C0 871 13 854 25 841L389 487L303 -13C302 -20 301 -26 301 -33C301 -59 314 -83 343 -83C357 -83 370 -78 383 -71L832 165L1281 -71C1293 -78 1307 -83 1321 -83C1350 -83 1362 -59 1362 -33C1362 -26 1362 -20 1361 -13L1275 487L1638 841C1651 854 1664 871 1664 889Z"/>
<path transform="translate(1310.20,479.61) scale(0.01190,-0.01197)" fill="#dcdcdc" d="M1664 889C1664 919 1632 931 1608 935L1106 1008L881 1463C872 1482 855 1504 832 1504C809 1504 792 1482 783 1463L558 1008L56 935C31 931 0 919 0 889C0 871 13 854 25 841L389 487L303 -13C302 -20 301 -26 301 -33C301 -59 314 -83 343 -83C357 -83 370 -78 383 -71L832 165L1281 -71C1293 -78 1307 -83 1321 -83C1350 -83 1362 -59 1362 -33C1362 -26 1362 -20 1361 -13L1275 487L1638 841C1651 854 1664 871 1664 889Z"/>
<path transform="translate(1337.60,479.61) scale(0.01190,-0.01197)" fill="#dcdcdc" d="M1664 889C1664 919 1632 931 1608 935L1106 1008L881 1463C872 1482 855 1504 832 1504C809 1504 792 1482 783 1463L558 1008L56 935C31 931 0 919 0 889C0 871 13 854 25 841L389 487L303 -13C302 -20 301 -26 301 -33C301 -59 314 -83 343 -83C357 -83 370 -78 383 -71L832 165L1281 -71C1293 -78 1307 -83 1321 -83C1350 -83 1362 -59 1362 -33C1362 -26 1362 -20 1361 -13L1275 487L1638 841C1651 854 1664 871 1664 889Z"/>
<path transform="translate(522.00,105.06) scale(0.00977,-0.00955)" fill="#fff" d="M1024 832C1024 867 995 896 960 896H64C29 896 0 867 0 832C0 815 7 799 19 787L467 339C479 327 495 320 512 320C529 320 545 327 557 339L1005 787C1017 799 1024 815 1024 832Z"/>
<path transform="translate(677.50,105.06) scale(0.00977,-0.00955)" fill="#fff" d="M1024 832C1024 867 995 896 960 896H64C29 896 0 867 0 832C0 815 7 799 19 787L467 339C479 327 495 320 512 320C529 320 545 327 557 339L1005 787C1017 799 1024 815 1024 832Z"/>
<path transform="translate(801.00,105.06) scale(0.00977,-0.00955)" fill="#fff" d="M1024 832C1024 867 995 896 960 896H64C29 896 0 867 0 832C0 815 7 799 19 787L467 339C479 327 495 320 512 320C529 320 545 327 557 339L1005 787C1017 799 1024 815 1024 832Z"/>
<path transform="translate(894.50,105.06) scale(0.00977,-0.00955)" fill="#fff" d="M1024 832C1024 867 995 896 960 896H64C29 896 0 867 0 832C0 815 7 799 19 787L467 339C479 327 495 320 512 320C529 320 545 327 557 339L1005 787C1017 799 1024 815 1024 832Z"/>
<path transform="translate(1040.50,105.06) scale(0.00977,-0.00955)" fill="#fff" d="M1024 832C1024 867 995 896 960 896H64C29 896 0 867 0 832C0 815 7 799 19 787L467 339C479 327 495 320 512 320C529 320 545 327 557 339L1005 787C1017 799 1024 815 1024 832Z"/>
<path transform="translate(1252.00,105.06) scale(0.00977,-0.00955)" fill="#fff" d="M1024 832C1024 867 995 896 960 896H64C29 896 0 867 0 832C0 815 7 799 19 787L467 339C479 327 495 320 512 320C529 320 545 327 557 339L1005 787C1017 799 1024 815 1024 832Z"/></svg>
<div class="t" id="t0" style="left:325.46px;font:400 12px 'Liberation Sans',sans-serif;color:#333;top:-4.00px;transform:scaleX(1.1122);transform-origin:0 0;">Windows 10: So findet in</div>
<div class="t" id="t1" style="left:537.96px;font:400 12px 'Liberation Sans',sans-serif;color:#161616;top:-4.00px;transform:scaleX(1.1200);transform-origin:0 0;">Systemreinigung &amp; -wart</div>
<div class="t" id="t2" style="left:281.325px;font:400 15px 'Liberation Sans',sans-serif;color:#0b8043;top:28.50px;transform:scaleX(0.9904);transform-origin:0 0;">Sicher</div>
<div class="t" id="t3" style="left:343.825px;font:400 15px 'Liberation Sans',sans-serif;color:#777;top:28.50px;transform:scaleX(1.0613);transform-origin:0 0;"><span style="color:#0b8043">https</span><span style="color:#777">://</span><span style="color:#222">www.netzwelt.de</span><span style="color:#777">/download/system/reinigung-wartung/index.html</span></div>
<div class="t" id="t4" style="left:203.155px;font:400 41px 'Liberation Sans',sans-serif;color:#84e000;top:72.75px;transform:scaleX(0.9246);transform-origin:0 0;-webkit-text-stroke:0.5px #84e000;">netzwelt</div>
<div class="t" id="t5" style="left:371.1px;font:400 20px 'Liberation Sans',sans-serif;color:#fff;top:85.00px;transform:scaleX(0.9697);transform-origin:0 0;-webkit-text-stroke:0.45px #fff;">News</div>
<div class="t" id="t6" style="left:447.6px;font:400 20px 'Liberation Sans',sans-serif;color:#fff;top:85.00px;transform:scaleX(0.9404);transform-origin:0 0;-webkit-text-stroke:0.45px #fff;">Themen</div>
<div class="t" id="t7" style="left:555.1px;font:400 20px 'Liberation Sans',sans-serif;color:#fff;top:85.00px;transform:scaleX(0.9699);transform-origin:0 0;-webkit-text-stroke:0.45px #fff;">Kaufberatung</div>
<div class="t" id="t8" style="left:710.1px;font:400 20px 'Liberation Sans',sans-serif;color:#fff;top:85.00px;transform:scaleX(0.9612);transform-origin:0 0;-webkit-text-stroke:0.45px #fff;">Download</div>
<div class="t" id="t9" style="left:833.6px;font:400 20px 'Liberation Sans',sans-serif;color:#fff;top:85.00px;transform:scaleX(0.9514);transform-origin:0 0;-webkit-text-stroke:0.45px #fff;">Handy</div>
<div class="t" id="t10" style="left:927.1px;font:400 20px 'Liberation Sans',sans-serif;color:#fff;top:85.00px;transform:scaleX(0.9434);transform-origin:0 0;-webkit-text-stroke:0.45px #fff;">TV &amp; Stream</div>
<div class="t" id="t11" style="left:1072.1px;font:400 20px 'Liberation Sans',sans-serif;color:#fff;top:85.00px;transform:scaleX(0.9513);transform-origin:0 0;-webkit-text-stroke:0.45px #fff;">Service &amp; Störungen</div>
<div class="t" id="t12" style="left:417.96px;font:400 12px 'Liberation Sans',sans-serif;color:#fff;top:72.50px;transform:scaleX(1.1065);transform-origin:0 0;">2</div>
<div class="t" id="t13" style="left:1252.46px;font:400 12px 'Liberation Sans',sans-serif;color:#fff;top:72.00px;transform:scaleX(1.1813);transform-origin:0 0;">6</div>
<div class="t" id="t14" style="left:257.47px;font:700 34px 'DejaVu Serif','Liberation Serif',serif;color:#111;top:188.75px;transform:scaleX(0.8775);transform-origin:0 0;">Systemreinigung &amp; -wartung</div>
<div class="t" id="t15" style="left:257.7625px;font:400 27.5px 'Liberation Sans',sans-serif;color:#888;top:239.50px;transform:scaleX(1.0478);transform-origin:0 0;">Downloads</div>
<div class="t" id="t16" style="left:333.78px;font:400 16px 'Liberation Sans',sans-serif;color:#777;top:310.25px;transform:scaleX(1.0395);transform-origin:0 0;">von <span style="color:#3b73d9">Dirk Hottes</span></div>
<div class="t" id="t17" style="left:333.78px;font:400 16px 'Liberation Sans',sans-serif;color:#777;top:327.25px;transform:scaleX(1.0249);transform-origin:0 0;">am 24. Aug. 2018 um 07:36 Uhr</div>
<div class="t" id="t18" style="left:258.0775px;font:400 20.5px 'Liberation Sans',sans-serif;color:#161616;top:391.00px;transform:scaleX(1.0817);transform-origin:0 0;">Mit steigender Nutzungsdauer füllen Computer zunehmend mit</div>
<div class="t" id="t19" style="left:258.0775px;font:400 20.5px 'Liberation Sans',sans-serif;color:#161616;top:424.00px;transform:scaleX(1.0713);transform-origin:0 0;">unbenötigten Daten, die die Systemperformance beeinträchtigen. In</div>
<div class="t" id="t20" style="left:258.0775px;font:400 20.5px 'Liberation Sans',sans-serif;color:#161616;top:457.00px;transform:scaleX(1.0676);transform-origin:0 0;">diesem Fall lassen sich Windows und macOS mit den passenden</div>
<div class="t" id="t21" style="left:258.0775px;font:400 20.5px 'Liberation Sans',sans-serif;color:#161616;top:490.00px;transform:scaleX(1.0672);transform-origin:0 0;">Tools warten, aufräumen und beschleunigen. Dazu analysieren die</div>
<div class="t" id="t22" style="left:258.0775px;font:400 20.5px 'Liberation Sans',sans-serif;color:#161616;top:523.00px;transform:scaleX(1.0701);transform-origin:0 0;">hier gelisteten Anwendungen Registrierungsdatenbank, die Zustände</div>
<div class="t" id="t23" style="left:258.0775px;font:400 20.5px 'Liberation Sans',sans-serif;color:#161616;top:556.00px;transform:scaleX(1.0738);transform-origin:0 0;">vonFestplatten, den Autostart oder aktive Dienste.</div>
<div class="t" id="t24" style="left:327.33250000000004px;font:400 21.5px 'Liberation Sans',sans-serif;color:#161616;top:641.75px;transform:scaleX(1.0273);transform-origin:0 0;">Reinigungs- und Wartungs-Tools im Test</div>
<div class="t" id="t25" style="left:287.28px;font:400 16px 'Liberation Sans',sans-serif;color:#161616;top:682.25px;transform:scaleX(1.0238);transform-origin:0 0;">Wir zeigen euch die besten Tools zum Reinigen und Warten eures Betriebssystems.</div>
<div class="t" id="t26" style="left:547.26px;font:400 22px 'Liberation Sans',sans-serif;color:#fff;top:744.50px;transform:scaleX(1.0259);transform-origin:0 0;">Jetzt lesen</div>
<div class="t" id="t27" style="left:274.0325px;font:400 21.5px 'Liberation Sans',sans-serif;color:#fff;top:866.75px;transform:scaleX(1.0559);transform-origin:0 0;">Alle</div>
<div class="t" id="t28" style="left:759.1225px;font:400 19.5px 'Liberation Sans',sans-serif;color:#3b73d9;top:867.00px;transform:scaleX(0.9526);transform-origin:0 0;">Datum</div>
<div class="t" id="t29" style="left:1125.28px;font:700 16px 'Liberation Sans',sans-serif;color:#111;top:219.00px;transform:scaleX(0.9558);transform-origin:0 0;">Download-Garantie</div>
<div class="t" id="t30" style="left:1146.28px;font:400 16px 'Liberation Sans',sans-serif;color:#161616;top:247.40px;transform:scaleX(1.0319);transform-origin:0 0;">Redaktionell gepflegt</div>
<div class="t" id="t31" style="left:1146.28px;font:400 16px 'Liberation Sans',sans-serif;color:#161616;top:271.45px;transform:scaleX(1.0429);transform-origin:0 0;">Virengeprüft</div>
<div class="t" id="t32" style="left:1146.28px;font:400 16px 'Liberation Sans',sans-serif;color:#161616;top:295.50px;transform:scaleX(1.0361);transform-origin:0 0;">Kostenlos</div>
<div class="t" id="t33" style="left:1146.28px;font:400 16px 'Liberation Sans',sans-serif;color:#161616;top:319.55px;transform:scaleX(1.0120);transform-origin:0 0;">Ohne Installer</div>
<div class="t" id="t34" style="left:1015.88px;font:400 16px 'Liberation Sans',sans-serif;color:#161616;top:410.60px;transform:scaleX(1.0339);transform-origin:0 0;">Anzahl Programme</div>
<div class="t" id="t35" style="left:1227.28px;font:400 16px 'Liberation Sans',sans-serif;color:#161616;top:410.60px;transform:scaleX(1.0788);transform-origin:0 0;">42</div>
<div class="t" id="t36" style="left:1015.88px;font:400 16px 'Liberation Sans',sans-serif;color:#161616;top:454.60px;transform:scaleX(1.0410);transform-origin:0 0;">92 Nutzerwertungen</div>
<div class="t" id="t37" style="left:1015.88px;font:400 16px 'Liberation Sans',sans-serif;color:#999;top:473.00px;transform:scaleX(1.0197);transform-origin:0 0;">6 von 10 Punkten</div>
<div class="t" id="t38" style="left:1027.28px;font:400 16px 'Liberation Sans',sans-serif;color:#3b73d9;top:569.50px;transform:scaleX(1.0315);transform-origin:0 0;">Download-Übersicht</div>
<div class="t" id="t39" style="left:1027.28px;font:400 16px 'Liberation Sans',sans-serif;color:#3b73d9;top:600.90px;transform:scaleX(1.0267);transform-origin:0 0;">Download-Chart</div>
<div class="t" id="t40" style="left:1027.28px;font:400 16px 'Liberation Sans',sans-serif;color:#3b73d9;top:632.00px;transform:scaleX(1.0288);transform-origin:0 0;">Dateien umwandeln</div>
<div class="t" id="t41" style="left:1027.28px;font:400 16px 'Liberation Sans',sans-serif;color:#3b73d9;top:663.90px;transform:scaleX(1.0120);transform-origin:0 0;">Prozesse &amp; Dienste</div>
<div class="t" id="t42" style="left:1232.78px;font:400 16px 'Liberation Sans',sans-serif;color:#3b73d9;top:569.50px;transform:scaleX(1.0318);transform-origin:0 0;">Anleitungen</div>
<div class="t" id="t43" style="left:1232.78px;font:400 16px 'Liberation Sans',sans-serif;color:#3b73d9;top:600.90px;transform:scaleX(1.0284);transform-origin:0 0;">Aktuelle Updates</div>
<div class="t" id="t44" style="left:1232.78px;font:400 16px 'Liberation Sans',sans-serif;color:#3b73d9;top:632.00px;transform:scaleX(1.0217);transform-origin:0 0;">Dateiendungen</div>
<div class="t" id="t45" style="left:1003.77px;font:400 14px 'Liberation Sans',sans-serif;color:#888;top:750.30px;transform:scaleX(0.9873);transform-origin:0 0;">Anzeige</div>
<div class="a" style="left:452px;top:0;width:24px;height:12px;background:linear-gradient(90deg,rgba(212,212,212,0),#d4d4d4 85%)"></div>
<div class="a" style="left:664px;top:0;width:24px;height:12px;background:linear-gradient(90deg,rgba(242,242,242,0),#f2f2f2 85%)"></div>
</body></html>
